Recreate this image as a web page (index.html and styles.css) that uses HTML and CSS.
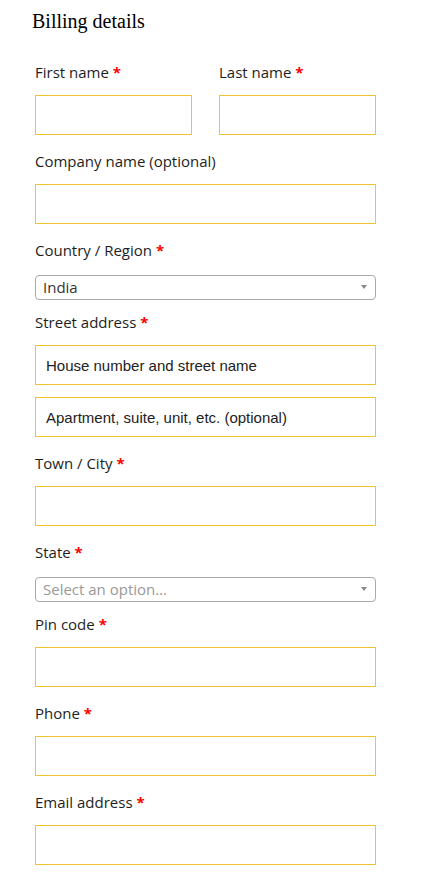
FILE: index.html
```html
<!DOCTYPE html>
<html lang="en">
<head>
<meta charset="utf-8">
<title>Billing details</title>
<link rel="stylesheet" href="styles.css">
</head>
<body>
<div class="billing">
  <h3 class="title">Billing details</h3>
  <div class="fields">
    <div class="row-pair">
      <p class="row">
        <label class="label">First name <abbr class="required">*</abbr></label>
        <input class="input" type="text">
      </p>
      <p class="row">
        <label class="label">Last name <abbr class="required">*</abbr></label>
        <input class="input" type="text">
      </p>
    </div>
    <p class="row">
      <label class="label">Company name (optional)</label>
      <input class="input" type="text">
    </p>
    <div class="row row-select">
      <label class="label">Country / Region <abbr class="required">*</abbr></label>
      <div class="select"><span class="select-value">India</span><span class="select-arrow"></span></div>
    </div>
    <p class="row">
      <label class="label">Street address <abbr class="required">*</abbr></label>
      <input class="input" type="text" placeholder="House number and street name">
    </p>
    <p class="row">
      <input class="input" type="text" placeholder="Apartment, suite, unit, etc. (optional)">
    </p>
    <p class="row">
      <label class="label">Town / City <abbr class="required">*</abbr></label>
      <input class="input" type="text">
    </p>
    <div class="row row-select">
      <label class="label">State <abbr class="required">*</abbr></label>
      <div class="select"><span class="select-value select-placeholder">Select an option…</span><span class="select-arrow"></span></div>
    </div>
    <p class="row">
      <label class="label">Pin code <abbr class="required">*</abbr></label>
      <input class="input" type="text">
    </p>
    <p class="row">
      <label class="label">Phone <abbr class="required">*</abbr></label>
      <input class="input" type="text">
    </p>
    <p class="row">
      <label class="label">Email address <abbr class="required">*</abbr></label>
      <input class="input" type="text">
    </p>
  </div>
</div>
</body>
</html>
```
FILE: styles.css
```css
html, body {
  margin: 0;
  padding: 0;
  background: #fff;
}

.billing {
  width: 347px;
  padding: 7px 0 0 32px;
  font-family: "Open Sans", "Liberation Sans", sans-serif;
}

.title {
  margin: 0 0 20px 0;
  font-family: "Liberation Serif", "Times New Roman", serif;
  font-weight: 400;
  font-size: 20px;
  line-height: 28px;
  color: #000;
}

.fields {
  display: flex;
  flex-direction: column;
}

.row-pair {
  display: flex;
  justify-content: space-between;
}

.row-pair .row {
  width: 157px;
}

.row {
  margin: 0 0 6px 0;
  padding: 3px;
  display: flex;
  flex-direction: column;
}

.label {
  display: block;
  font-size: 15px;
  line-height: 30px;
  color: #1e1e1e;
  margin-bottom: 7px;
  margin-top: -1px;
  padding-bottom: 1px;
}

.required {
  color: #f00;
  font-weight: 700;
  text-decoration: none;
  border: 0;
}

.input {
  box-sizing: border-box;
  width: 100%;
  height: 40px;
  margin: 0;
  padding: 0 10px;
  border: 1px solid #f3c32f;
  border-radius: 0;
  background: #fff;
  font-family: "Liberation Sans", Arial, sans-serif;
  font-size: 15px;
  color: #222;
  outline: none;
}

.input::placeholder {
  color: #222;
  opacity: 1;
}

.row-select {
  margin-bottom: 2px;
}

.row-select .label {
  margin-bottom: 9px;
}

.select {
  box-sizing: border-box;
  height: 25px;
  border: 1px solid #aaa;
  border-radius: 4px;
  display: flex;
  align-items: center;
  justify-content: space-between;
  padding: 0 8px 0 7px;
}

.select-value {
  font-size: 15px;
  line-height: 23px;
  color: #333;
}

.select-placeholder {
  color: #999;
}

.select-arrow {
  width: 0;
  height: 0;
  border-style: solid;
  border-width: 4px 3px 0 3px;
  border-color: #888 transparent transparent transparent;
  margin-top: -2px;
}
```
